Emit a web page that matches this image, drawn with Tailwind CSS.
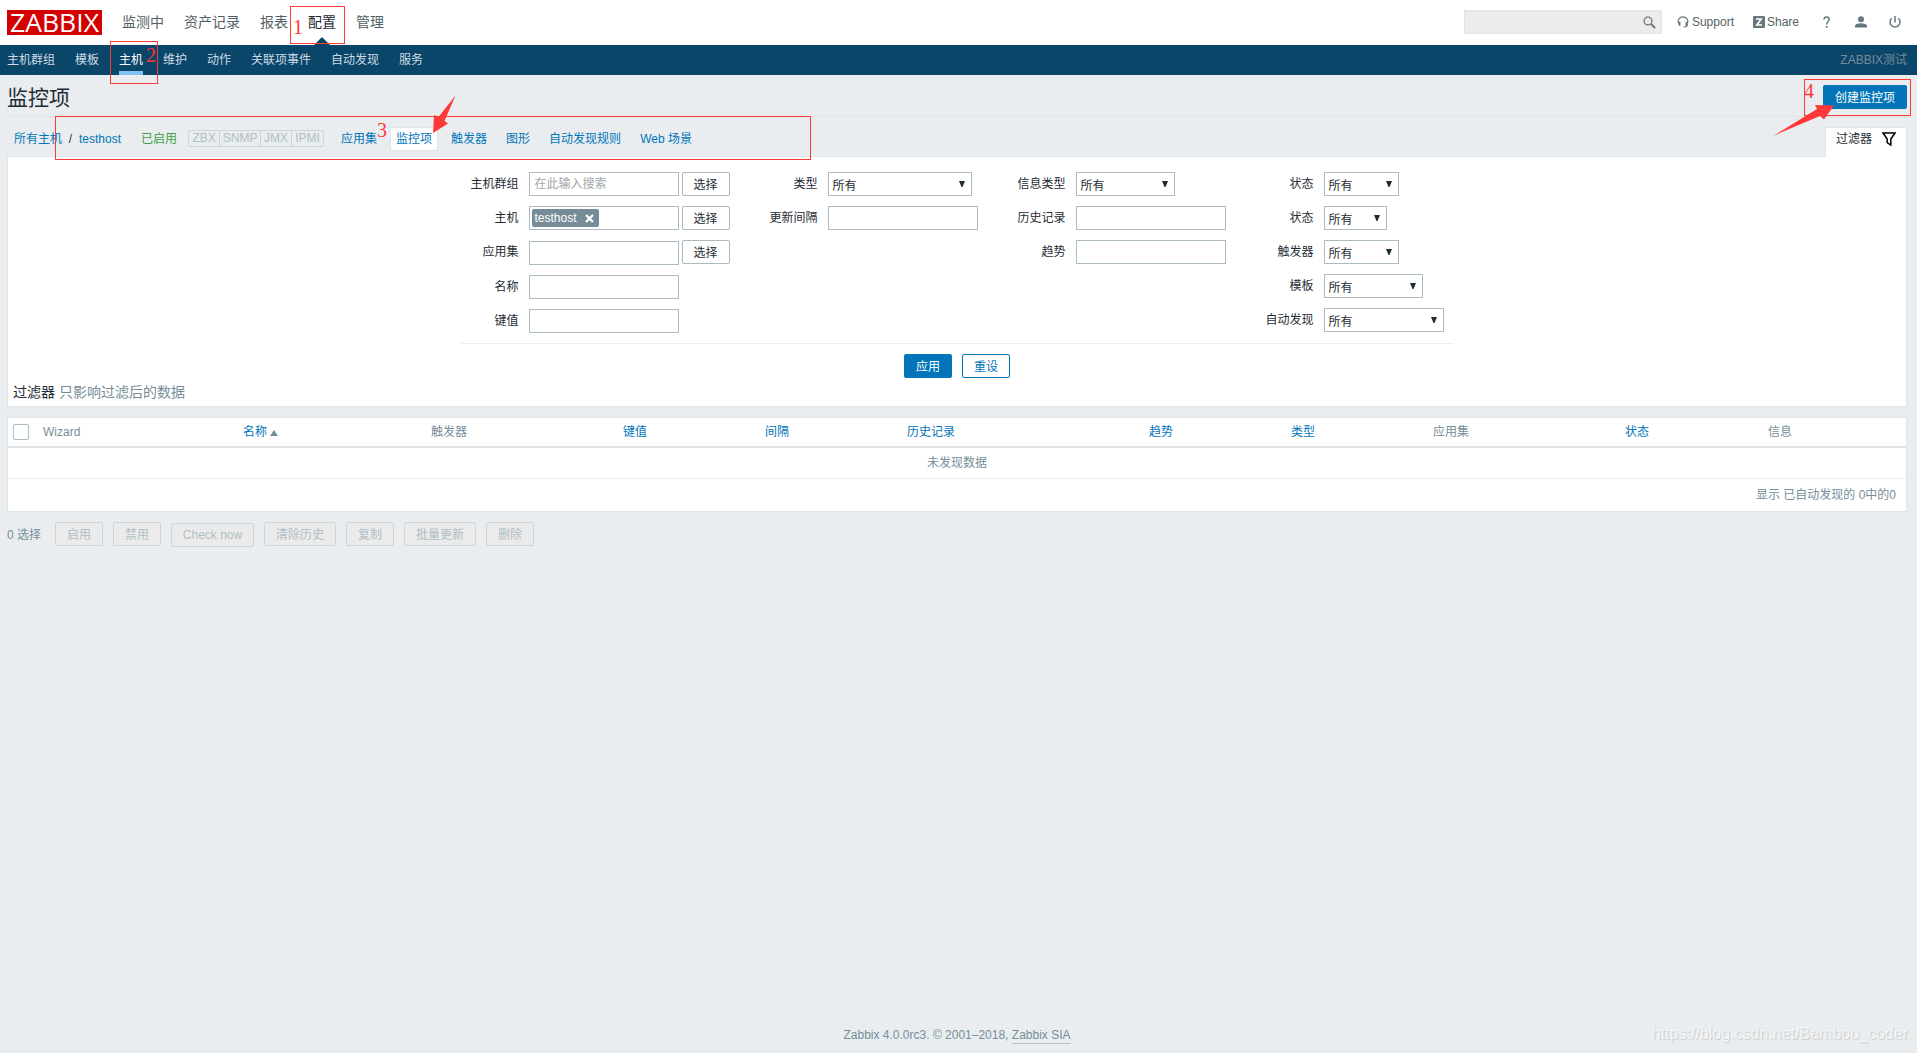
<!DOCTYPE html>
<html lang="zh-CN">
<head>
    <meta charset="UTF-8">
    <meta name="viewport" content="width=device-width, initial-scale=1.0">
    <title>监控项</title>
    <script src="https://cdn.jsdelivr.net/npm/@tailwindcss/browser@4"></script>
</head>
<body class="relative flex h-screen flex-col overflow-hidden bg-[#e9edf0] font-['Liberation_Sans','Noto_Sans_CJK_SC',sans-serif] text-xs leading-[18px] text-[#1f2c33]">
    <!-- Top navigation -->
    <header class="flex h-[45px] items-center bg-white pl-[7px] pr-4">
        <a class="h-[25px] w-[95px] bg-[#d40000]">
            <svg class="h-[25px] w-[95px] overflow-visible" viewBox="0 0 95 25"><text x="3" y="21.5" textLength="89" lengthAdjust="spacingAndGlyphs" font-size="25" font-family="Open Sans, sans-serif" fill="#fff">ZABBIX</text></svg>
        </a>
        <nav class="ml-5 flex h-full items-center gap-5 pb-px text-sm text-[#535f66]">
            <a>监测中</a>
            <a>资产记录</a>
            <a>报表</a>
            <a class="relative flex h-full items-center text-[#1f2c33]">配置
                <span class="absolute -bottom-px left-1/2 h-0 w-0 -translate-x-1/2 border-x-8 border-b-8 border-x-transparent border-b-[#0a466a]"></span>
            </a>
            <a>管理</a>
        </nav>
        <div class="ml-auto flex items-center pb-px text-[#535f66]">
            <div class="flex h-6 w-[198px] items-center justify-end border border-[#e3e3e3] bg-[#ececec] pr-[5px]">
                <svg class="h-[13px] w-[13px]" viewBox="0 0 13 13" fill="none" stroke="#66777f"><circle cx="5" cy="5" r="3.9" stroke-width="1.3"/><path d="M8 8l4 4" stroke-width="1.9"/></svg>
            </div>
            <a class="ml-[15px] flex items-center gap-[3px]">
                <svg class="h-3 w-3" viewBox="0 0 12 12" fill="none" stroke="#66777f"><path d="M1.6 7.5C.2 3.4 2.8.9 6 .9s5.800 2.500 4.400 6.600M10.400 8c0 2-1.400 3-3.900 3" stroke-width="1.200"/><path d="M2.500 5.800v4M9.500 5.800v4" stroke-width="1.900"/></svg>
                <span class="-mt-px">Support</span>
            </a>
            <a class="ml-[19px] flex items-center gap-0.5">
                <svg class="h-3 w-3" viewBox="0 0 12 12"><rect width="12" height="12" rx="1" fill="#66777f"/><path d="M3 3h5.200L3.800 9H9" fill="none" stroke="#fff" stroke-width="1.600"/></svg>
                <span class="-mt-px">Share</span>
            </a>
            <svg class="ml-6 h-3 w-[7px]" viewBox="0 0 7 12"><path d="M1 3.500C1 0 6.200.2 6.200 3.300c0 2.200-2.500 2.300-2.500 5.200" fill="none" stroke="#66777f" stroke-width="1.500"/><path d="M2.800 10h1.800v1.800H2.800z" fill="#66777f"/></svg>
            <svg class="ml-[25px] h-3 w-3" viewBox="0 0 12 12" fill="#66777f"><circle cx="6" cy="3.300" r="3"/><path d="M0 11.500V10c0-1.800 2.500-2.700 6-2.700s6 .9 6 2.700v1.500z"/></svg>
            <svg class="ml-[22px] h-3 w-3" viewBox="0 0 12 12" fill="none" stroke="#66777f" stroke-width="1.500"><path d="M2.700 2.200a5 5 0 1 0 6.600 0M6 0v6.500"/></svg>
        </div>
    </header>

    <!-- Second level menu -->
    <nav class="flex h-[30px] items-center gap-5 bg-[#0a466a] pl-[7px] pr-2.5 text-[#cfdbe3]">
        <a>主机群组</a>
        <a>模板</a>
        <a class="relative flex h-full items-center text-white">主机
            <span class="absolute bottom-0 left-0 h-1 w-full bg-[#7ec3f3]"></span>
        </a>
        <a>维护</a>
        <a>动作</a>
        <a>关联项事件</a>
        <a>自动发现</a>
        <a>服务</a>
        <span class="ml-auto text-[#768d99]">ZABBIX测试</span>
    </nav>

    <main class="pl-[7px] pr-2.5">
        <div class="flex h-[42px] items-center justify-between border-b border-[#dfe4e7] pt-[3px]">
            <h1 class="pt-px text-[21px] leading-6">监控项</h1>
            <button class="h-6 w-[84px] rounded-xs bg-[#0275b8] pt-px text-white">创建监控项</button>
        </div>

        <!-- Host breadcrumbs and filter tab -->
        <div class="flex h-[39px] items-end">
            <div class="flex h-[34px] items-center pl-[7px] text-[#0275b8]">
                <a>所有主机</a>
                <span class="w-[17px] text-center text-[#1f2c33]">/</span>
                <a>testhost</a>
                <span class="ml-5 text-[#429e47]">已启用</span>
                <span class="-mt-px ml-[11px] flex h-[17px] divide-x divide-[#ccd5d9] rounded-xs border border-[#ccd5d9] leading-[15px] text-[#b0bec5]">
                    <span class="w-[31px] text-center">ZBX</span>
                    <span class="w-[41px] text-center">SNMP</span>
                    <span class="w-[31px] text-center">JMX</span>
                    <span class="w-[31px] text-center">IPMI</span>
                </span>
                <a class="ml-[17px]">应用集</a>
                <a class="ml-[13px] flex h-6 w-12 items-center justify-center border border-[#dfe4e7] bg-white">监控项</a>
                <a class="ml-[13px]">触发器</a>
                <a class="ml-[19px]">图形</a>
                <a class="ml-[19px]">自动发现规则</a>
                <a class="ml-[19px]">Web 场景</a>
            </div>
            <div class="relative z-10 -mb-px ml-auto flex h-[30px] w-[82px] items-start justify-between border border-b-0 border-[#dfe4e7] bg-white pl-2.5 pr-2.5 pt-0.5">
                <span>过滤器</span>
                <svg class="mt-0.5 h-3.5 w-3.5" viewBox="0 0 14 14" fill="none" stroke="#000" stroke-width="1.500"><path d="M1 1h12L8.800 7v6L5.200 10.500V7z"/></svg>
            </div>
        </div>

        <!-- Filter -->
        <section class="h-[251px] border border-[#dfe4e7] bg-white">
            <div class="mx-auto flex h-[187px] w-[993px] border-b border-[#ebeef0] pt-[15px]">
                <div class="w-[269px] space-y-2.5">
                    <div class="flex h-6">
                        <label class="mr-2.5 mt-[3px] w-[58px] text-right">主机群组</label>
                        <div class="w-[150px] border border-[#acbbc2] px-[5px] pt-0.5 text-[#a0a6aa]">在此输入搜索</div>
                        <button class="ml-[3px] w-12 rounded-xs border border-[#acbbc2] pt-px">选择</button>
                    </div>
                    <div class="flex h-6">
                        <label class="mr-2.5 mt-[3px] w-[58px] text-right">主机</label>
                        <div class="w-[150px] border border-[#acbbc2] p-0.5">
                            <span class="flex h-[18px] w-[67px] items-center justify-between rounded-xs bg-[#768d99] pl-[3px] pr-[5px] text-white">testhost
                                <svg class="h-[9px] w-[9px]" viewBox="0 0 9 9" stroke="#fff" stroke-width="2.300"><path d="M1 1l7 7M8 1L1 8"/></svg>
                            </span>
                        </div>
                        <button class="ml-[3px] w-12 rounded-xs border border-[#acbbc2] pt-px">选择</button>
                    </div>
                    <div class="flex h-[25px]">
                        <label class="mr-2.5 mt-[3px] w-[58px] text-right">应用集</label>
                        <div class="mt-px w-[150px] border border-[#acbbc2]"></div>
                        <button class="mb-px ml-[3px] w-12 rounded-xs border border-[#acbbc2] pt-px">选择</button>
                    </div>
                    <div class="flex h-6">
                        <label class="mr-2.5 mt-[3px] w-[58px] text-right">名称</label>
                        <div class="w-[150px] border border-[#acbbc2]"></div>
                    </div>
                    <div class="flex h-6">
                        <label class="mr-2.5 mt-[3px] w-[58px] text-right">键值</label>
                        <div class="w-[150px] border border-[#acbbc2]"></div>
                    </div>
                </div>
                <div class="w-[248px] space-y-2.5">
                    <div class="flex h-6">
                        <label class="mr-2.5 mt-[3px] w-[88px] text-right">类型</label>
                        <div class="flex w-36 justify-between border border-[#acbbc2] pl-1 pr-1.5 pt-1">所有<svg class="mt-1 h-1.5 w-1.5" viewBox="0 0 6 6"><path d="M0 0h6L3.500 6h-1z" fill="#1f2c33"/></svg></div>
                    </div>
                    <div class="flex h-6">
                        <label class="mr-2.5 mt-[3px] w-[88px] text-right">更新间隔</label>
                        <div class="w-[150px] border border-[#acbbc2]"></div>
                    </div>
                </div>
                <div class="w-[248px] space-y-2.5">
                    <div class="flex h-6">
                        <label class="mr-2.5 mt-[3px] w-[88px] text-right">信息类型</label>
                        <div class="flex w-[99px] justify-between border border-[#acbbc2] pl-1 pr-1.5 pt-1">所有<svg class="mt-1 h-1.5 w-1.5" viewBox="0 0 6 6"><path d="M0 0h6L3.500 6h-1z" fill="#1f2c33"/></svg></div>
                    </div>
                    <div class="flex h-6">
                        <label class="mr-2.5 mt-[3px] w-[88px] text-right">历史记录</label>
                        <div class="w-[150px] border border-[#acbbc2]"></div>
                    </div>
                    <div class="flex h-6">
                        <label class="mr-2.5 mt-[3px] w-[88px] text-right">趋势</label>
                        <div class="w-[150px] border border-[#acbbc2]"></div>
                    </div>
                </div>
                <div class="space-y-2.5">
                    <div class="flex h-6">
                        <label class="mr-2.5 mt-[3px] w-[88px] text-right">状态</label>
                        <div class="flex w-[75px] justify-between border border-[#acbbc2] pl-1 pr-1.5 pt-1">所有<svg class="mt-1 h-1.5 w-1.5" viewBox="0 0 6 6"><path d="M0 0h6L3.500 6h-1z" fill="#1f2c33"/></svg></div>
                    </div>
                    <div class="flex h-6">
                        <label class="mr-2.5 mt-[3px] w-[88px] text-right">状态</label>
                        <div class="flex w-[63px] justify-between border border-[#acbbc2] pl-1 pr-1.5 pt-1">所有<svg class="mt-1 h-1.5 w-1.5" viewBox="0 0 6 6"><path d="M0 0h6L3.500 6h-1z" fill="#1f2c33"/></svg></div>
                    </div>
                    <div class="flex h-6">
                        <label class="mr-2.5 mt-[3px] w-[88px] text-right">触发器</label>
                        <div class="flex w-[75px] justify-between border border-[#acbbc2] pl-1 pr-1.5 pt-1">所有<svg class="mt-1 h-1.5 w-1.5" viewBox="0 0 6 6"><path d="M0 0h6L3.500 6h-1z" fill="#1f2c33"/></svg></div>
                    </div>
                    <div class="flex h-6">
                        <label class="mr-2.5 mt-[3px] w-[88px] text-right">模板</label>
                        <div class="flex w-[99px] justify-between border border-[#acbbc2] pl-1 pr-1.5 pt-1">所有<svg class="mt-1 h-1.5 w-1.5" viewBox="0 0 6 6"><path d="M0 0h6L3.500 6h-1z" fill="#1f2c33"/></svg></div>
                    </div>
                    <div class="flex h-6">
                        <label class="mr-2.5 mt-[3px] w-[88px] text-right">自动发现</label>
                        <div class="flex w-[120px] justify-between border border-[#acbbc2] pl-1 pr-1.5 pt-1">所有<svg class="mt-1 h-1.5 w-1.5" viewBox="0 0 6 6"><path d="M0 0h6L3.500 6h-1z" fill="#1f2c33"/></svg></div>
                    </div>
                </div>
            </div>
            <div class="mt-2.5 flex justify-center gap-2.5">
                <button class="h-6 w-12 rounded-xs border border-[#0275b8] bg-[#0275b8] pt-px text-white">应用</button>
                <button class="h-6 w-12 rounded-xs border border-[#0275b8] pt-px text-[#0275b8]">重设</button>
            </div>
            <div class="mt-[5px] pl-[5px] text-sm leading-[18px] text-[#768d99]"><span class="text-[#1f2c33]">过滤器</span> 只影响过滤后的数据</div>
        </section>

        <!-- Items -->
        <div class="mt-2.5 border border-[#dfe4e7] bg-white text-[#768d99]">
            <table class="w-full table-fixed">
                <colgroup>
                    <col class="w-[29px]"><col class="w-[200px]"><col class="w-[188px]"><col class="w-[192px]"><col class="w-[142px]"><col class="w-[142px]"><col class="w-[242px]"><col class="w-[142px]"><col class="w-[142px]"><col class="w-[192px]"><col class="w-[143px]"><col>
                </colgroup>
                <thead>
                    <tr class="h-[29px] border-b-2 border-[#dfe4e7] text-left">
                        <th class="pl-[5px]"><span class="block h-4 w-4 rounded-xs border border-[#acbbc2] bg-white"></span></th>
                        <th class="pl-1.5 font-normal">Wizard</th>
                        <th class="pl-1.5 font-normal text-[#0275b8]">名称<span class="ml-[3px] inline-block h-0 w-0 border-x-4 border-b-[6px] border-x-transparent border-b-[#768d99]"></span></th>
                        <th class="pl-1.5 font-normal">触发器</th>
                        <th class="pl-1.5 font-normal text-[#0275b8]">键值</th>
                        <th class="pl-1.5 font-normal text-[#0275b8]">间隔</th>
                        <th class="pl-1.5 font-normal text-[#0275b8]">历史记录</th>
                        <th class="pl-1.5 font-normal text-[#0275b8]">趋势</th>
                        <th class="pl-1.5 font-normal text-[#0275b8]">类型</th>
                        <th class="pl-1.5 font-normal">应用集</th>
                        <th class="pl-1.5 font-normal text-[#0275b8]">状态</th>
                        <th class="pl-1.5 font-normal">信息</th>
                    </tr>
                </thead>
                <tbody>
                    <tr class="h-[31px] border-b border-[#ebeef0]">
                        <td colspan="12" class="text-center">未发现数据</td>
                    </tr>
                    <tr class="h-[33px]">
                        <td colspan="12" class="pr-2.5 text-right">显示 已自动发现的 0中的0</td>
                    </tr>
                </tbody>
            </table>
        </div>

        <div class="mt-2.5 flex items-start gap-2.5 text-[#b0bec5]">
            <span class="mr-1 mt-1 w-[34px] whitespace-nowrap text-[#768d99]">0 选择</span>
            <button class="h-6 w-12 rounded-xs border border-[#ccd5d9] bg-[#ebebeb] pt-px">启用</button>
            <button class="h-6 w-12 rounded-xs border border-[#ccd5d9] bg-[#ebebeb] pt-px">禁用</button>
            <button class="mt-px h-6 w-[83px] rounded-xs border border-[#ccd5d9] bg-[#ebebeb]">Check now</button>
            <button class="h-6 w-[72px] rounded-xs border border-[#ccd5d9] bg-[#ebebeb] pt-px">清除历史</button>
            <button class="h-6 w-12 rounded-xs border border-[#ccd5d9] bg-[#ebebeb] pt-px">复制</button>
            <button class="h-6 w-[72px] rounded-xs border border-[#ccd5d9] bg-[#ebebeb] pt-px">批量更新</button>
            <button class="h-6 w-12 rounded-xs border border-[#ccd5d9] bg-[#ebebeb] pt-px">删除</button>
        </div>
    </main>

    <footer class="mb-[9px] mt-auto pr-[3px] text-center text-[#768d99]">Zabbix 4.0.0rc3. © 2001–2018, <a class="inline-block border-b border-[#b9c4ca] leading-4">Zabbix SIA</a></footer>

    <!-- Step annotations drawn over the page -->
    <div class="pointer-events-none absolute inset-0 z-20 font-['Liberation_Serif',serif] text-xl leading-5 text-[#ff3838]">
        <div class="absolute left-[290px] top-[6px] h-[38px] w-[55px] border border-[#ff3838]"></div>
        <div class="absolute left-[110px] top-[41px] h-[43px] w-[48px] border border-[#ff3838]"></div>
        <div class="absolute left-[55px] top-[116px] h-[44px] w-[756px] border border-[#ff3838]"></div>
        <div class="absolute left-[1804px] top-[79px] h-[37px] w-[107px] border border-[#ff3838]"></div>
        <span class="absolute left-[293px] top-[17px]">1</span>
        <span class="absolute left-[146px] top-[45px]">2</span>
        <span class="absolute left-[377px] top-[120px]">3</span>
        <span class="absolute left-[1804px] top-[81px]">4</span>
        <svg class="absolute inset-0 h-full w-full" fill="#ff3838">
            <polygon points="455.500,95.500 438.500,117 434,115 433,133 448,123.500 444.500,121"/>
            <polygon points="1773,136 1817,109 1815,105 1834,105.500 1824,119.500 1820,116"/>
        </svg>
    </div>
    <span class="absolute bottom-[9px] right-[9px] text-base leading-5 text-white/70 [text-shadow:1px_1px_1px_rgba(0,0,0,0.15)]">https://blog.csdn.net/Bamboo_coder</span>
</body>
</html>
